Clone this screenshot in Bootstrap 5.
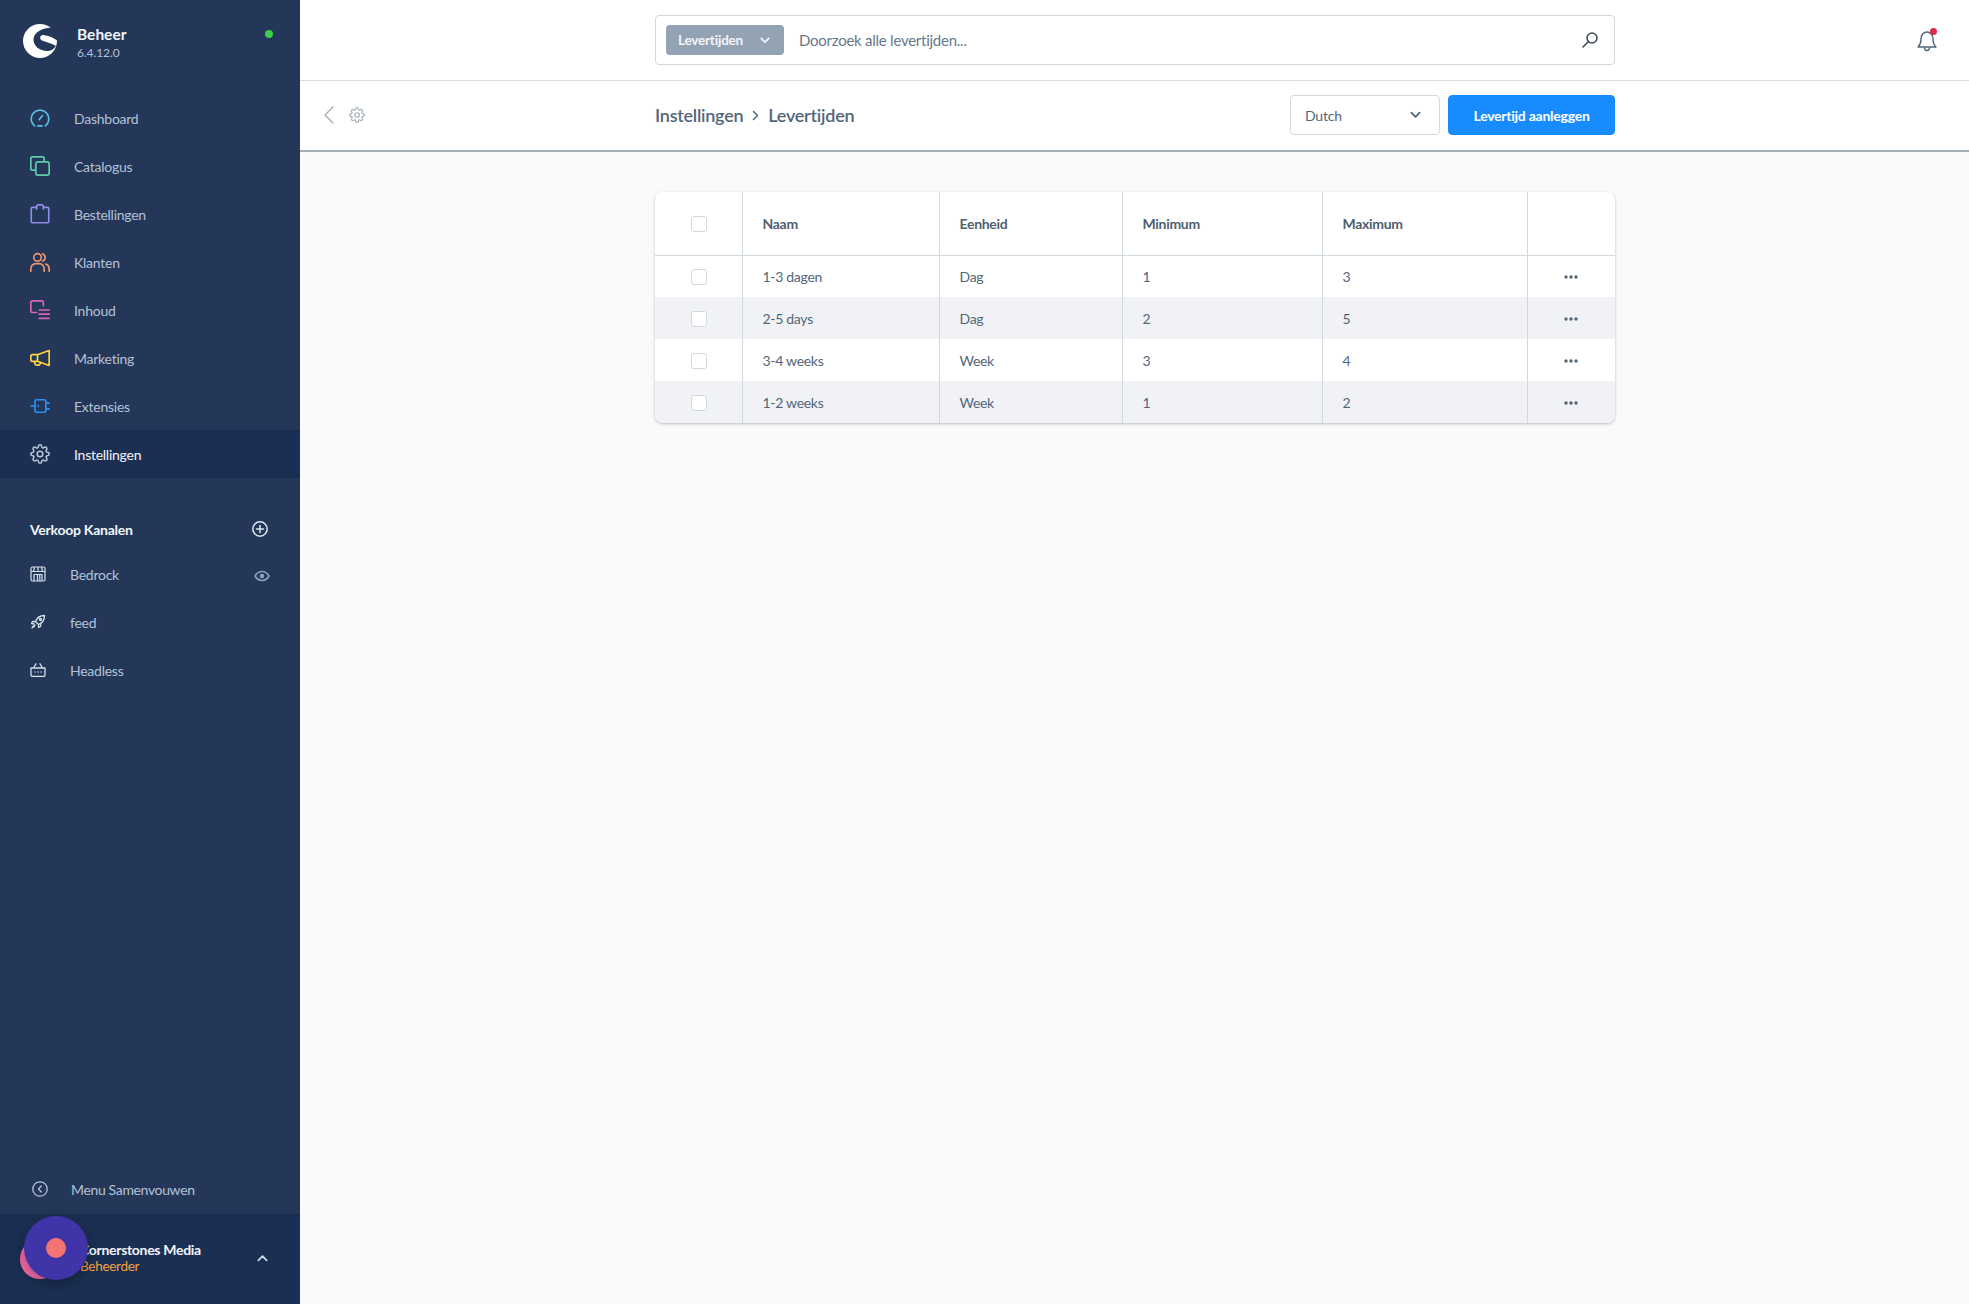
<!DOCTYPE html>
<html lang="nl">
<head>
    <meta charset="UTF-8">
    <meta name="viewport" content="width=device-width, initial-scale=1.0">
    <title>Levertijden</title>
    <link href="https://cdn.jsdelivr.net/npm/bootstrap@5.3.0/dist/css/bootstrap.min.css" rel="stylesheet">
    <style>
        body {
            font-family: "Lato", "Noto Sans", sans-serif;
            font-size: 14px;
            color: #52667a;
            background-color: #f9fafb;
            overflow: hidden;
        }
        svg { display: block; flex: none; }
        .sidebar {
            width: 300px;
            flex: none;
            background-color: #243758;
            color: #b3c2d9;
        }
        .brand { height: 94px; padding: 24px 26px 0 23px; }
        .brand-text { margin-left: 20px; }
        .brand-name { font-size: 15.5px; font-weight: 700; color: #f2f5f9; line-height: 20px; }
        .brand-version { font-size: 12px; line-height: 14px; letter-spacing: -.1px; margin-top: 2px; }
        .status-dot { width: 8px; height: 8px; background-color: #37d046; margin-top: 6px; margin-right: 1px; }
        .nav-row { height: 48px; padding-left: 30px; letter-spacing: -.25px; }
        .nav-row .label { margin-left: 24px; }
        .nav-row.active { background-color: #1b2f52; color: #f2f5f9; }
        .section-title { height: 32px; margin-top: 35px; padding: 0 32px 0 30px; font-weight: 700; color: #f2f5f9; letter-spacing: -.25px; }
        .channel { height: 48px; padding: 0 30px 0 30px; letter-spacing: -.25px; }
        .channel-first { margin-top: 5px; }
        .channel .label { margin-left: 24px; }
        .collapse-row { height: 46px; padding-left: 32px; letter-spacing: -.35px; margin-bottom: 2px; }
        .collapse-row .label { margin-left: 23px; }
        .user-foot { height: 90px; background-color: #1b2f52; padding: 0 32px 3px 80px; }
        .user-name { font-weight: 700; color: #f2f5f9; line-height: 17px; letter-spacing: -.3px; }
        .user-role { font-size: 13.5px; color: #f5a040; line-height: 17px; letter-spacing: -.3px; }
        .avatar-pink {
            position: absolute; left: 20px; top: 1239px;
            width: 40px; height: 40px; background-color: #f56aa8;
        }
        .help-bubble {
            position: absolute; left: 24px; top: 1216px;
            width: 64px; height: 64px; background-color: #3f35a8;
            box-shadow: 0 4px 14px rgba(0,0,0,.3);
        }
        .help-bubble span { width: 20px; height: 20px; background-color: #f27474; }
        .topbar { height: 81px; background-color: #fff; border-bottom: 1px solid #d8dde3; padding-right: 31px; }
        .page-col { width: 960px; margin-left: 355px; }
        .search-box { height: 50px; border: 1px solid #d1d9e0; border-radius: 4px; padding: 0 15px 0 10px; }
        .search-type { width: 118px; height: 30px; background-color: #94a3b3; color: #f2f5f9; border-radius: 4px; font-weight: 700; font-size: 13.5px; padding: 0 14px 0 12px; letter-spacing: -.2px; }
        .search-text { margin-left: 15px; font-size: 15px; color: #67788a; letter-spacing: -.25px; }
        .bell { margin-left: auto; position: relative; }
        .bell-dot { position: absolute; right: 1px; top: 0; width: 7px; height: 7px; background-color: #de294c; }
        .smartbar { height: 71px; background-color: #fff; border-bottom: 2px solid #a3abb3; padding: 0 354px 1px 24px; }
        .back-tools { width: 331px; gap: 15px; }
        .crumbs { font-size: 18px; font-weight: 600; color: #52667a; letter-spacing: -.25px; margin-top: 1px; }
        .crumbs svg { margin: 0 9px; }
        .lang-select { width: 150px; height: 40px; border: 1px solid #d1d9e0; border-radius: 4px; padding: 0 18px 0 14px; letter-spacing: -.2px; }
        .btn-create {
            width: 167px; height: 40px; padding: 0;
            --bs-btn-bg: #188cff; --bs-btn-border-color: #188cff; --bs-btn-color: #fff;
            --bs-btn-hover-bg: #188cff; --bs-btn-hover-border-color: #188cff; --bs-btn-hover-color: #fff;
            --bs-btn-font-size: 14px; --bs-btn-font-weight: 700; --bs-btn-border-radius: 4px;
            letter-spacing: -.25px;
        }
        .list-card { width: 960px; margin: 40px 0 0 355px; border: 0; border-radius: 8px; overflow: hidden; box-shadow: 0 1px 3px rgba(0,0,0,.25); }
        .list-table { table-layout: fixed; width: 960px; --bs-table-color: #52667a; letter-spacing: -.3px; }
        .list-table th, .list-table td { padding: 0 0 0 20px; vertical-align: middle; border-right: 1px solid #d1d9e0; border-bottom: 0; }
        .list-table th:last-child, .list-table td:last-child { border-right: 0; }
        .list-table th { height: 63px; font-weight: 700; border-bottom: 1px solid #d1d9e0; color: #4f5f70; }
        .list-table td { height: 42px; }
        .list-table tbody tr:nth-child(even) td { background-color: #f0f2f5; }
        .list-table .check-col { padding: 0; }
        .list-table .form-check-input { width: 16px; height: 16px; margin: 1px 0 0 36px; border-color: #d1d9e0; border-radius: 3px; display: block; }
        .dots { margin: 2px 0 0 36px; }
    </style>
</head>
<body>
    <svg width="0" height="0" class="position-absolute">
        <symbol id="gear" viewBox="0 0 24 24">
            <circle cx="12" cy="12" r="3.4" fill="none" stroke="currentColor" stroke-width="1.8"/>
            <path fill="none" stroke="currentColor" stroke-width="1.8" d="M19.4 15a1.65 1.65 0 0 0 .33 1.82l.06.06a2 2 0 0 1 0 2.83 2 2 0 0 1-2.83 0l-.06-.06a1.65 1.65 0 0 0-1.82-.33 1.65 1.65 0 0 0-1 1.51V21a2 2 0 0 1-2 2 2 2 0 0 1-2-2v-.09A1.65 1.65 0 0 0 9 19.4a1.65 1.65 0 0 0-1.82.33l-.06.06a2 2 0 0 1-2.83 0 2 2 0 0 1 0-2.83l.06-.06a1.65 1.65 0 0 0 .33-1.82 1.65 1.65 0 0 0-1.51-1H3a2 2 0 0 1-2-2 2 2 0 0 1 2-2h.09A1.65 1.65 0 0 0 4.6 9a1.65 1.65 0 0 0-.33-1.82l-.06-.06a2 2 0 0 1 0-2.83 2 2 0 0 1 2.83 0l.06.06a1.65 1.65 0 0 0 1.82.33H9a1.65 1.65 0 0 0 1-1.51V3a2 2 0 0 1 2-2 2 2 0 0 1 2 2v.09a1.65 1.65 0 0 0 1 1.51 1.65 1.65 0 0 0 1.82-.33l.06-.06a2 2 0 0 1 2.83 0 2 2 0 0 1 0 2.83l-.06.06a1.65 1.65 0 0 0-.33 1.82V9a1.65 1.65 0 0 0 1.51 1H21a2 2 0 0 1 2 2 2 2 0 0 1-2 2h-.09a1.65 1.65 0 0 0-1.51 1z"/>
        </symbol>
        <symbol id="chev-down" viewBox="0 0 12 8">
            <path d="M1.5 1.5 6 6l4.5-4.5" fill="none" stroke="currentColor" stroke-width="2" stroke-linecap="round" stroke-linejoin="round"/>
        </symbol>
        <symbol id="dots3" viewBox="0 0 14 4">
            <circle cx="2" cy="2" r="1.7" fill="currentColor"/><circle cx="7" cy="2" r="1.7" fill="currentColor"/><circle cx="12" cy="2" r="1.7" fill="currentColor"/>
        </symbol>
    </svg>

    <div class="d-flex vh-100">
        <!-- sidebar -->
        <aside class="sidebar d-flex flex-column">
            <div class="brand d-flex align-items-start">
                <svg width="34" height="34" viewBox="0 0 34 34">
                    <circle cx="17" cy="17" r="17" fill="#fff"/>
                    <path fill="#243758" d="M28 3.500C18 4 11 9 10.500 15 10 22 17 27 24 27c4 0 7-2 9-5-5-3-11-4-14-5.500-3-1.500-2-5.500 1-5.500 6 .5 11 3 14 5.500V0h-6z"/>
                </svg>
                <div class="brand-text">
                    <div class="brand-name">Beheer</div>
                    <div class="brand-version">6.4.12.0</div>
                </div>
                <span class="status-dot rounded-circle ms-auto"></span>
            </div>

            <div class="nav-row d-flex align-items-center">
                <svg width="20" height="20" viewBox="0 0 24 24" fill="none" stroke="#5cc0e6" stroke-width="2" stroke-linecap="round"><path d="M5.5 21.5A11 11 0 0 1 1.5 13 10.5 10.5 0 0 1 12 2.5 10.5 10.5 0 0 1 22.5 13a11 11 0 0 1-4 8.5"/><path d="M9.5 21.5h5M11 14l4-5"/></svg>
                <span class="label">Dashboard</span>
            </div>
            <div class="nav-row d-flex align-items-center">
                <svg width="20" height="20" viewBox="0 0 24 24" fill="none" stroke="#5ecbab" stroke-width="2" stroke-linejoin="round"><path d="M6 17H3a2 2 0 0 1-2-2V3a2 2 0 0 1 2-2h12a2 2 0 0 1 2 2v3"/><rect x="7" y="7" width="16" height="16" rx="2.5"/></svg>
                <span class="label">Catalogus</span>
            </div>
            <div class="nav-row d-flex align-items-center">
                <svg width="20" height="20" viewBox="0 0 24 24" fill="none" stroke="#8f8fe6" stroke-width="2" stroke-linejoin="round"><path d="M8 4H3a1.5 1.5 0 0 0-1.5 1.500V21A1.5 1.5 0 0 0 3 22.500h18a1.5 1.5 0 0 0 1.500-1.500V5.500A1.5 1.5 0 0 0 21 4h-5"/><path d="M8 7V3a2 2 0 0 1 2-2h4a2 2 0 0 1 2 2v4"/></svg>
                <span class="label">Bestellingen</span>
            </div>
            <div class="nav-row d-flex align-items-center">
                <svg width="20" height="20" viewBox="0 0 24 24" fill="none" stroke="#ef9470" stroke-width="2" stroke-linecap="round"><circle cx="9" cy="6.5" r="4.5"/><path d="M1 23v-3a6 6 0 0 1 6-6h4a6 6 0 0 1 6 6v3"/><path d="M15 2.2a4.5 4.5 0 0 1 0 8.600M19 14.500a6 6 0 0 1 4 5.500v3"/></svg>
                <span class="label">Klanten</span>
            </div>
            <div class="nav-row d-flex align-items-center">
                <svg width="20" height="20" viewBox="0 0 24 24" fill="none" stroke="#d865b5" stroke-width="2" stroke-linecap="round" stroke-linejoin="round"><path d="M8 15H3a2 2 0 0 1-2-2V3a2 2 0 0 1 2-2h11a2 2 0 0 1 2 2v4"/><path d="M11 12h12M11 17h12M11 22h12"/></svg>
                <span class="label">Inhoud</span>
            </div>
            <div class="nav-row d-flex align-items-center">
                <svg width="20" height="20" viewBox="0 0 24 24" fill="none" stroke="#ffd43f" stroke-width="2" stroke-linejoin="round"><path d="M23 3v18L9 16H3a2 2 0 0 1-2-2v-4a2 2 0 0 1 2-2h6z"/><path d="M9 8v8M5 16l1 3a2 2 0 0 0 2 1.500h3l2-2.500"/></svg>
                <span class="label">Marketing</span>
            </div>
            <div class="nav-row d-flex align-items-center">
                <svg width="20" height="20" viewBox="0 0 24 24" fill="none" stroke="#2b8ff0" stroke-width="2" stroke-linecap="round"><rect x="6" y="4.5" width="13" height="15" rx="2"/><path d="M1 12h5M19 8.500h4M19 15.500h4"/><path d="M10 11v2" stroke-width="1.5"/></svg>
                <span class="label">Extensies</span>
            </div>
            <div class="nav-row active d-flex align-items-center">
                <svg width="20" height="20" style="color:#b9c6da"><use href="#gear"/></svg>
                <span class="label">Instellingen</span>
            </div>

            <div class="section-title d-flex align-items-center justify-content-between">
                <span>Verkoop Kanalen</span>
                <svg width="16" height="16" viewBox="0 0 16 16" fill="none" stroke="#dfe6f0" stroke-width="1.5" stroke-linecap="round"><circle cx="8" cy="8" r="7.2"/><path d="M8 4.500v7M4.500 8h7"/></svg>
            </div>
            <div class="channel channel-first d-flex align-items-center">
                <svg width="16" height="16" viewBox="0 0 16 16" fill="none" stroke="#d5deeb" stroke-width="1.2" stroke-linejoin="round"><rect x="1" y="1" width="14" height="14" rx="1.5"/><path d="M1 5.500h14M4 15V8.500h3.500V15M7.500 8.500H12V15M9.800 8.500V15M4.500 1 3.500 5.500M8 1v4.500M11.500 1l1 4.500"/></svg>
                <span class="label">Bedrock</span>
                <svg class="ms-auto mt-1" width="16" height="12" viewBox="0 0 16 12" fill="none" stroke="#8fa1b8" stroke-width="1.6"><path d="M1 6c3.500-6 10.500-6 14 0-3.500 6-10.500 6-14 0z"/><circle cx="8" cy="6" r="1.5" fill="#8fa1b8"/></svg>
            </div>
            <div class="channel d-flex align-items-center">
                <svg width="16" height="16" viewBox="0 0 16 16" fill="none" stroke="#d5deeb" stroke-width="1.3" stroke-linejoin="round"><path d="M5.500 7.500C7 3.500 10 1.500 14.500 1.500 14.500 6 12.500 9 8.500 10.500z"/><path d="M5.500 7.500H2.500L1.500 9.500l3 .5M8.500 10.500v3l2-1 .5-3M5 11c-1.500.5-2.500 1.500-3 3 1.500-.5 2.500-1.500 3-3z"/><circle cx="10.500" cy="5.500" r="1"/></svg>
                <span class="label">feed</span>
            </div>
            <div class="channel d-flex align-items-center">
                <svg width="16" height="14" viewBox="0 0 16 14" fill="none" stroke="#d5deeb" stroke-width="1.3" stroke-linejoin="round" stroke-linecap="round"><path d="M1 5h14v7a1.500 1.500 0 0 1-1.500 1.500h-11A1.500 1.500 0 0 1 1 12zM3.500 5 6 .8M12.500 5 10 .8"/><path d="M5 9h.1M8 9h.1M11 9h.1"/></svg>
                <span class="label">Headless</span>
            </div>

            <div class="collapse-row d-flex align-items-center mt-auto">
                <svg width="16" height="16" viewBox="0 0 16 16" fill="none" stroke="#b3c2d9" stroke-width="1.3" stroke-linecap="round" stroke-linejoin="round"><circle cx="8" cy="8" r="7.2"/><path d="M9.300 5 6.500 8l2.800 3"/></svg>
                <span class="label">Menu Samenvouwen</span>
            </div>
            <div class="user-foot d-flex align-items-center justify-content-between">
                <div>
                    <div class="user-name">Cornerstones Media</div>
                    <div class="user-role">Beheerder</div>
                </div>
                <svg width="11" height="8" viewBox="0 0 12 8" style="color:#cfd9e6"><g transform="rotate(180 6 4)"><use href="#chev-down"/></g></svg>
            </div>
            <span class="avatar-pink rounded-circle"></span>
            <div class="help-bubble rounded-circle d-flex align-items-center justify-content-center"><span class="rounded-circle"></span></div>
        </aside>

        <!-- main -->
        <main class="flex-grow-1 d-flex flex-column">
            <div class="topbar d-flex align-items-center">
                <div class="page-col search-box d-flex align-items-center">
                    <div class="search-type d-flex align-items-center justify-content-between">
                        <span>Levertijden</span>
                        <svg width="10" height="7" style="color:#f2f5f9"><use href="#chev-down"/></svg>
                    </div>
                    <span class="search-text">Doorzoek alle levertijden...</span>
                    <svg class="ms-auto" width="18" height="18" viewBox="0 0 18 18" fill="none" stroke="#3f4c5c" stroke-width="1.6" stroke-linecap="round"><circle cx="11" cy="7" r="5"/><path d="M7.500 10.500 2 16"/></svg>
                </div>
                <div class="bell">
                    <svg width="22" height="24" viewBox="0 0 22 24" fill="none" stroke="#52667a" stroke-width="1.4" stroke-linejoin="round"><path d="M2 19c2-2 3-4 3-8 0-4 2.500-7 6-7s6 3 6 7c0 4 1 6 3 8z"/><path d="M8.500 19.500c0 4 5 4 5 0"/></svg>
                    <span class="bell-dot rounded-circle"></span>
                </div>
            </div>
            <div class="smartbar d-flex align-items-center">
                <div class="back-tools d-flex align-items-center">
                    <svg width="10" height="18" viewBox="0 0 10 18" fill="none" stroke="#a4afbb" stroke-width="1.4" stroke-linecap="round" stroke-linejoin="round"><path d="M9 1 1 9l8 8"/></svg>
                    <svg width="16" height="16" style="color:#a4afbb"><use href="#gear"/></svg>
                </div>
                <div class="crumbs d-flex align-items-center">
                    <span>Instellingen</span>
                    <svg width="7" height="11" viewBox="0 0 7 11" fill="none" stroke="#52667a" stroke-width="1.5" stroke-linecap="round" stroke-linejoin="round"><path d="M1.500 1.500 5.500 5.500l-4 4"/></svg>
                    <span>Levertijden</span>
                </div>
                <div class="d-flex align-items-center gap-2 ms-auto">
                    <div class="lang-select d-flex align-items-center justify-content-between">
                        <span>Dutch</span>
                        <svg width="11" height="8" style="color:#52667a"><use href="#chev-down"/></svg>
                    </div>
                    <button type="button" class="btn btn-create">Levertijd aanleggen</button>
                </div>
            </div>
            <div class="card list-card">
                <table class="table list-table mb-0">
                    <colgroup>
                        <col style="width:87px"><col style="width:197px"><col style="width:183px"><col style="width:200px"><col style="width:205px"><col>
                    </colgroup>
                    <thead>
                        <tr>
                            <th class="check-col"><input class="form-check-input" type="checkbox"></th>
                            <th>Naam</th><th>Eenheid</th><th>Minimum</th><th>Maximum</th><th></th>
                        </tr>
                    </thead>
                    <tbody id="rows"></tbody>
                </table>
            </div>
        </main>
    </div>

    <script>
        const deliveryTimes = [
            ['1-3 dagen', 'Dag', 1, 3],
            ['2-5 days', 'Dag', 2, 5],
            ['3-4 weeks', 'Week', 3, 4],
            ['1-2 weeks', 'Week', 1, 2]
        ];
        document.getElementById('rows').innerHTML = deliveryTimes.map(r => `
            <tr>
                <td class="check-col"><input class="form-check-input" type="checkbox"></td>
                <td>${r[0]}</td><td>${r[1]}</td><td>${r[2]}</td><td>${r[3]}</td>
                <td class="p-0"><svg class="dots" width="14" height="4" style="color:#52667a"><use href="#dots3"/></svg></td>
            </tr>`).join('');
    </script>
    <script src="https://cdn.jsdelivr.net/npm/bootstrap@5.3.0/dist/js/bootstrap.bundle.min.js"></script>
</body>
</html>
